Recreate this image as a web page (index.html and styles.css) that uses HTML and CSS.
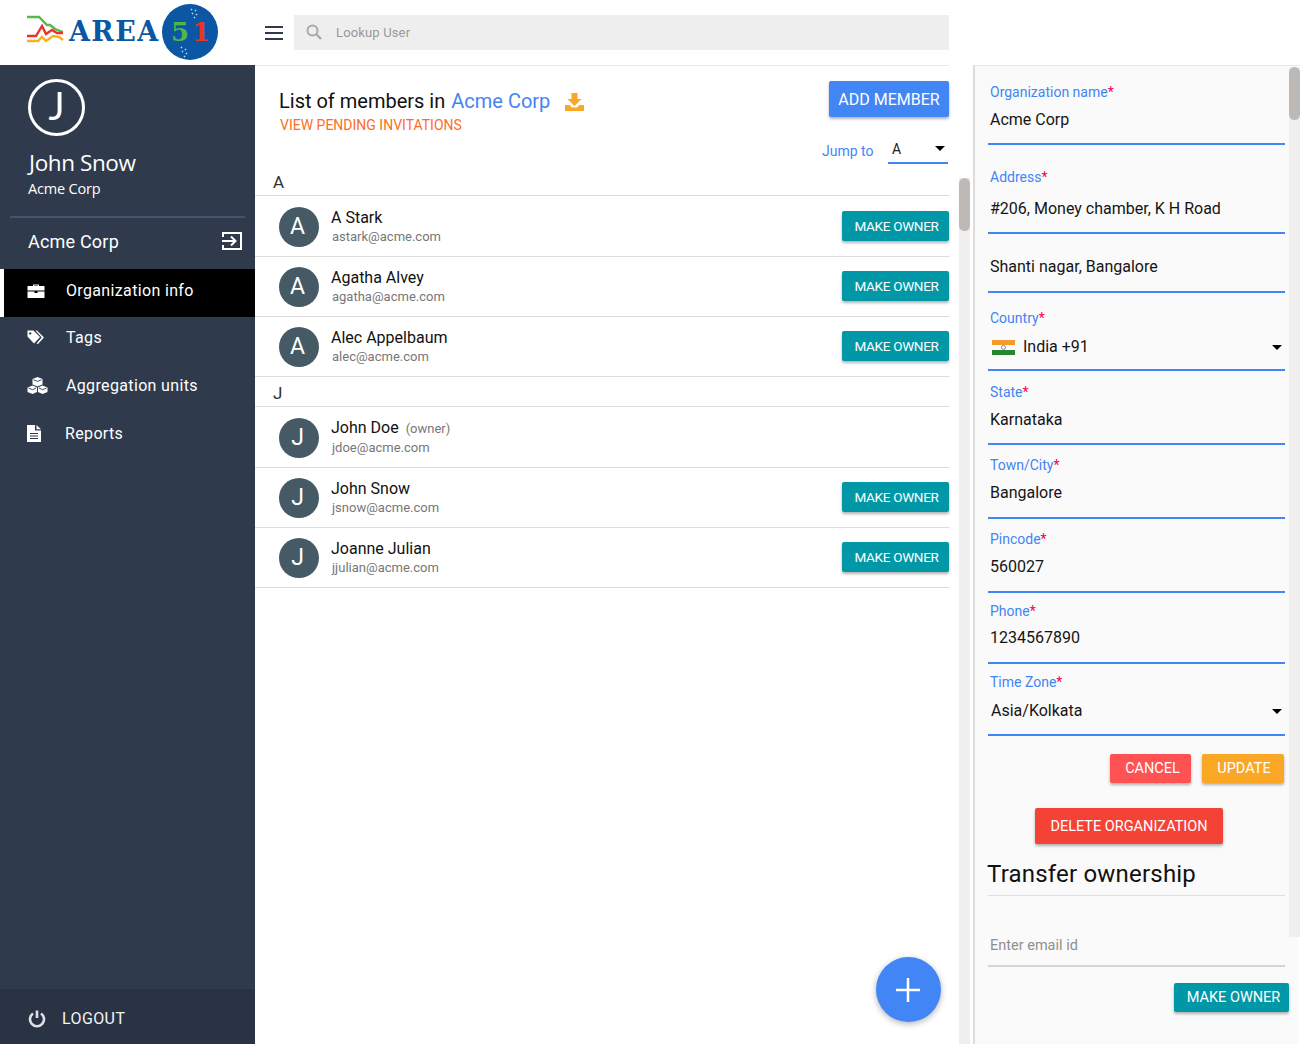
FILE: index.html
```html
<!DOCTYPE html>
<html>
<head>
    <title>Area51 - Organization info</title>
    <meta name="viewport" content="width=device-width, initial-scale=1.0">
    <link rel="stylesheet" href="styles.css">
</head>
<body>
    <header class="topbar">
        <svg class="logo" width="222" height="65" viewBox="0 0 222 65">
            <path d="M27 17H39L47 25H50L55 29L63 32" fill="none" stroke="#58b947" stroke-width="2.4"/>
            <path d="M27 36H36L42 26L46 34L52 30L57 33H63" fill="none" stroke="#e8352a" stroke-width="2.4"/>
            <path d="M27 41H38L42 37L46 41L53 36L59 37L63 40" fill="none" stroke="#f7b21b" stroke-width="2.4"/>
            <text x="69" y="41" class="logo-area">AREA</text>
            <circle cx="190" cy="32" r="28" fill="#0b57a4"/>
            <text x="171" y="41" class="logo-num logo-five">5</text>
            <text x="192" y="41" class="logo-num logo-one">1</text>
            <path d="M191 9l1 1M195 10l1 1M192 13l1 1M196 14l1 1M194 17l1 1M181 47l1 1M185 49l1 1M182 51l1 1M186 53l1 1M184 56l1 1" stroke="#cfe0f2" stroke-width="1.4"/>
        </svg>
        <button class="menu-btn">
            <span></span><span></span><span></span>
        </button>
        <div class="search">
            <svg width="16" height="16" viewBox="0 0 16 16"><circle cx="6.5" cy="6.5" r="5" fill="none" stroke="#a9a9a9" stroke-width="2"/><path d="M10.5 10.5L15 15" stroke="#a9a9a9" stroke-width="2.4"/></svg>
            <span>Lookup User</span>
        </div>
    </header>

    <div class="layout">
        <aside class="sidebar">
            <div class="profile">
                <div class="profile-avatar">J</div>
                <div class="profile-name">John Snow</div>
                <div class="profile-org">Acme Corp</div>
            </div>
            <div class="org-row">
                <span>Acme Corp</span>
                <svg width="22" height="20" viewBox="0 0 22 20"><path d="M2 6V2H20V18H2V14" fill="none" stroke="#fff" stroke-width="2"/><path d="M1 10H14M10 5.5L14.500 10L10 14.500" fill="none" stroke="#fff" stroke-width="2"/></svg>
            </div>
            <nav class="nav">
                <a class="nav-item active">
                    <svg width="18" height="14" viewBox="0 0 18 14"><path d="M6 2V0.500H12V2H17.500V6.500H0.500V2ZM7.200 2H10.800V1.500H7.200ZM0.500 7.500H7.500V9H10.500V7.500H17.500V14H0.500Z" fill="#fff"/></svg>
                    <span>Organization info</span>
                </a>
                <a class="nav-item">
                    <svg width="18" height="15" viewBox="0 0 18 15"><path d="M0.500 0.500H6.500L13 7L7 13.500L0.500 6.500ZM3.200 2.200a1.200 1.200 0 1 0 .01 0ZM8.500 0.500H10L17 7.500L11 14L9.500 13.500L14.700 7.500Z" fill="#fff" fill-rule="evenodd"/></svg>
                    <span>Tags</span>
                </a>
                <a class="nav-item nav-units">
                    <svg width="21" height="17" viewBox="0 0 21 17"><path d="M10.500 0L15.500 2V7.500L10.500 9.500L5.500 7.500V2ZM5.500 8.500L10 10.500V15L5.500 17L0.500 15V10.500ZM15.500 8.500L20.500 10.500V15L15.500 17L11 15V10.500Z" fill="#fff"/><path d="M6.500 2.800L10.500 4.400L14.500 2.800M1.500 11L5.500 12.700L9 11M12 11L15.500 12.700L19.500 11" fill="none" stroke="#2f3a4d" stroke-width="0.900"/></svg>
                    <span>Aggregation units</span>
                </a>
                <a class="nav-item nav-reports">
                    <svg width="14" height="17" viewBox="0 0 14 17"><path d="M0 0H8V5.500H14V17H0ZM9.500 0L14 4.200H9.500Z" fill="#fff"/><path d="M3 8.500H11M3 11H11M3 13.500H11" stroke="#2f3a4d" stroke-width="1"/></svg>
                    <span>Reports</span>
                </a>
            </nav>
            <div class="logout">
                <svg width="18" height="18" viewBox="0 0 18 18"><path d="M5 3.500A7 7 0 1 0 13 3.500" fill="none" stroke="#dfe1e4" stroke-width="2.600"/><path d="M9 0.500V8" stroke="#dfe1e4" stroke-width="2.600"/></svg>
                <span>LOGOUT</span>
            </div>
        </aside>

        <main class="members">
            <div class="members-head">
                <div class="head-left">
                    <h2>List of members in <span class="org-link">Acme Corp</span>
                        <svg class="download" width="19" height="18" viewBox="0 0 19 18"><path d="M6.500 0H12.500V6H16.500L9.500 13L2.500 6H6.500Z" fill="#faa726"/><path d="M0 12H4.500L7 14.500H12L14.500 12H19V18H0Z" fill="#faa726"/></svg>
                    </h2>
                    <a class="pending">VIEW PENDING INVITATIONS</a>
                </div>
                <div class="head-right">
                    <button class="btn btn-add">ADD MEMBER</button>
                    <div class="jump">
                        <span class="jump-label">Jump to</span>
                        <div class="jump-select"><span>A</span><i class="caret"></i></div>
                    </div>
                </div>
            </div>

            <div class="group-label">A</div>
            <div class="member">
                <div class="avatar">A</div>
                <div class="member-info"><div class="member-name">A Stark</div><div class="member-mail">astark@acme.com</div></div>
                <button class="btn btn-owner">MAKE OWNER</button>
            </div>
            <div class="member">
                <div class="avatar">A</div>
                <div class="member-info"><div class="member-name">Agatha Alvey</div><div class="member-mail">agatha@acme.com</div></div>
                <button class="btn btn-owner">MAKE OWNER</button>
            </div>
            <div class="member">
                <div class="avatar">A</div>
                <div class="member-info"><div class="member-name">Alec Appelbaum</div><div class="member-mail">alec@acme.com</div></div>
                <button class="btn btn-owner">MAKE OWNER</button>
            </div>

            <div class="group-label">J</div>
            <div class="member">
                <div class="avatar">J</div>
                <div class="member-info"><div class="member-name">John Doe <small>(owner)</small></div><div class="member-mail">jdoe@acme.com</div></div>
            </div>
            <div class="member">
                <div class="avatar">J</div>
                <div class="member-info"><div class="member-name">John Snow</div><div class="member-mail">jsnow@acme.com</div></div>
                <button class="btn btn-owner">MAKE OWNER</button>
            </div>
            <div class="member">
                <div class="avatar">J</div>
                <div class="member-info"><div class="member-name">Joanne Julian</div><div class="member-mail">jjulian@acme.com</div></div>
                <button class="btn btn-owner">MAKE OWNER</button>
            </div>

            <button class="fab">
                <svg width="26" height="26" viewBox="0 0 26 26"><path d="M13 1V25M1 13H25" stroke="#fff" stroke-width="2.500"/></svg>
            </button>
        </main>

        <div class="list-scroll"><div class="thumb"></div></div>

        <section class="panel">
            <div class="field field-first">
                <label>Organization name<b>*</b></label>
                <div class="value">Acme Corp</div>
            </div>
            <div class="field field-address">
                <label>Address<b>*</b></label>
                <div class="value">#206, Money chamber, K H Road</div>
            </div>
            <div class="field field-line2">
                <div class="value">Shanti nagar, Bangalore</div>
            </div>
            <div class="field field-country">
                <label>Country<b>*</b></label>
                <div class="value value-select">
                    <svg class="flag" width="23" height="15" viewBox="0 0 23 15"><rect width="23" height="5" fill="#f79a2e"/><rect y="5" width="23" height="5" fill="#fafafa"/><rect y="10" width="23" height="5" fill="#25862f"/><circle cx="11.500" cy="7.500" r="2" fill="none" stroke="#6a6fa8" stroke-width="0.800"/></svg>
                    <span>India +91</span>
                    <i class="caret"></i>
                </div>
            </div>
            <div class="field field-std field-state">
                <label>State<b>*</b></label>
                <div class="value">Karnataka</div>
            </div>
            <div class="field field-std">
                <label>Town/City<b>*</b></label>
                <div class="value">Bangalore</div>
            </div>
            <div class="field field-std">
                <label>Pincode<b>*</b></label>
                <div class="value">560027</div>
            </div>
            <div class="field field-short">
                <label>Phone<b>*</b></label>
                <div class="value">1234567890</div>
            </div>
            <div class="field field-short field-zone">
                <label>Time Zone<b>*</b></label>
                <div class="value value-select value-zone">
                    <span>Asia/Kolkata</span>
                    <i class="caret"></i>
                </div>
            </div>

            <div class="form-actions">
                <button class="btn btn-cancel">CANCEL</button>
                <button class="btn btn-update">UPDATE</button>
            </div>
            <div class="delete-row">
                <button class="btn btn-delete">DELETE ORGANIZATION</button>
            </div>

            <h3 class="transfer-title">Transfer ownership</h3>
            <div class="email-input">Enter email id</div>
            <div class="transfer-actions">
                <button class="btn btn-owner btn-transfer">MAKE OWNER</button>
            </div>

            <div class="panel-scroll"><div class="thumb"></div></div>
        </section>
    </div>
</body>
</html>
```

FILE: styles.css
```css
* {
    box-sizing: border-box;
}

html,
body {
    height: 100%;
}

body {
    font-family: Roboto, "Liberation Sans", sans-serif;
    background-color: #fff;
    color: #111;
    margin: 0;
    overflow: hidden;
}

button {
    font-family: inherit;
    border: 0;
    cursor: pointer;
}

/* top bar */
.topbar {
    height: 65px;
    display: flex;
    align-items: center;
    background-color: #fff;
}

.logo {
    flex: none;
    width: 222px;
    height: 65px;
    margin-right: 43px;
}

.logo-area {
    font-family: "DejaVu Serif", serif;
    font-weight: bold;
    font-size: 27px;
    letter-spacing: 1.4px;
    fill: #0b57a4;
}

.logo-num {
    font-family: "DejaVu Serif", serif;
    font-weight: bold;
    font-size: 26px;
}

.logo-five {
    fill: #4fb848;
}

.logo-one {
    fill: #e8352a;
}

.menu-btn {
    width: 18px;
    padding: 0;
    margin-right: 11px;
    background: none;
    display: flex;
    flex-direction: column;
    gap: 4px;
}

.menu-btn span {
    display: block;
    height: 2px;
    background-color: #2f3a4d;
}

.search {
    width: 655px;
    height: 35px;
    margin-top: -1px;
    padding-left: 12px;
    display: flex;
    align-items: center;
    gap: 14px;
    background-color: #eee;
    color: #999;
    font-size: 13px;
    letter-spacing: 0.15px;
}

.layout {
    display: flex;
    height: calc(100vh - 65px);
}

/* sidebar */
.sidebar {
    flex: none;
    width: 255px;
    background-color: #2f3a4d;
    color: #fff;
    display: flex;
    flex-direction: column;
}

.profile {
    height: 153px;
    padding: 14px 0 0 18px;
    margin: 0 10px;
    font-family: "Open Sans", sans-serif;
    border-bottom: 2px solid #47536a;
}

.profile-avatar {
    width: 57px;
    height: 57px;
    border: 3px solid #fff;
    border-radius: 50%;
    font-family: Lato, sans-serif;
    font-size: 38px;
    line-height: 47px;
    text-align: center;
}

.profile-name {
    font-size: 22.500px;
    letter-spacing: -0.4px;
    line-height: 30px;
    margin-top: 12px;
    padding-left: 1px;
}

.profile-org {
    font-size: 14.500px;
    letter-spacing: -0.2px;
    line-height: 20px;
    margin-top: 1px;
}

.org-row {
    height: 51px;
    padding: 0 12px 5px 28px;
    display: flex;
    align-items: center;
    justify-content: space-between;
    font-size: 18px;
    letter-spacing: 0.2px;
}

.nav-item {
    height: 48px;
    padding: 0 0 7px 27px;
    display: flex;
    align-items: center;
    font-size: 16px;
    letter-spacing: 0.35px;
}

.nav-item svg {
    flex: none;
}

.nav-item svg + span {
    margin-left: 21px;
}

.nav-units svg + span {
    margin-left: 18px;
}

.nav-reports svg + span {
    margin-left: 24px;
}

.nav-item.active {
    background-color: #000;
    border-left: 4px solid #fff;
    padding: 0 0 5px 23px;
}

.logout {
    margin-top: auto;
    height: 55px;
    padding: 4px 0 0 28px;
    display: flex;
    align-items: center;
    gap: 16px;
    background-color: #2a3344;
    color: #f2f2f2;
    font-size: 16px;
    letter-spacing: 0.4px;
}

/* member list */
.members {
    position: relative;
    width: 694px;
    flex: none;
    margin-right: 10px;
    border-top: 1px solid #e8e8e8;
}

.members-head {
    height: 100px;
    padding: 15px 0 0 24px;
    display: flex;
    justify-content: space-between;
}

.head-left h2 {
    margin: 0;
    padding-top: 9px;
    font-size: 20px;
    font-weight: 400;
    line-height: 22px;
    display: flex;
    align-items: center;
}

.org-link {
    color: #4285f4;
    margin-left: 6px;
}

.download {
    margin-left: 15px;
    margin-top: 2px;
}

.pending {
    display: block;
    margin: 4px 0 0 1px;
    color: #ff6d1f;
    font-size: 14px;
    line-height: 18px;
}

.head-right {
    display: flex;
    flex-direction: column;
    align-items: flex-end;
}

.btn {
    color: #fff;
    border-radius: 2px;
    box-shadow: 0 2px 3px rgba(0, 0, 0, 0.3);
}

.btn-add {
    width: 120px;
    height: 36px;
    background-color: #4285f4;
    font-size: 16px;
}

.jump {
    width: 127px;
    margin-top: 18px;
    display: flex;
    align-items: center;
    color: #4285f4;
    font-size: 14px;
}

.jump-label {
    width: 66px;
    margin-top: 2px;
}

.jump-select {
    width: 60px;
    height: 29px;
    padding: 6px 3px 0 4px;
    border-bottom: 2px solid #4285f4;
    color: #222;
    display: flex;
    align-items: flex-start;
    justify-content: space-between;
}

.jump-select .caret {
    margin-top: 5px;
}

.caret {
    width: 0;
    height: 0;
    border-left: 5px solid transparent;
    border-right: 5px solid transparent;
    border-top: 5px solid #000;
}

.group-label {
    height: 30px;
    padding: 6px 0 0 18px;
    margin-bottom: 1px;
    border-bottom: 1px solid #ddd;
    font-size: 17px;
    line-height: 20px;
    color: #333;
}

.member {
    height: 60px;
    padding: 0 0 0 24px;
    display: flex;
    align-items: center;
    border-bottom: 1px solid #ddd;
}

.avatar {
    flex: none;
    width: 40px;
    height: 40px;
    padding-right: 3px;
    border-radius: 50%;
    background-color: #455a64;
    color: #fff;
    font-size: 23px;
    line-height: 40px;
    text-align: center;
}

.member-info {
    flex: 1;
    margin-left: 12px;
    padding: 1px 0;
}

.member-name {
    font-size: 16px;
    line-height: 20px;
}

.member-name small {
    font-size: 13px;
    color: #777;
    margin-left: 3px;
}

.member-mail {
    margin-left: 1px;
    font-size: 13px;
    line-height: 18px;
    color: #777;
}

.btn-owner {
    width: 107px;
    height: 30px;
    margin-top: -2px;
    padding: 0 0 0 2px;
    background-color: #0097a7;
    font-size: 13.500px;
    letter-spacing: -0.3px;
}

.fab {
    position: absolute;
    left: 620.500px;
    top: 891px;
    width: 65px;
    height: 65px;
    padding: 0;
    border-radius: 50%;
    background-color: #4285f4;
    box-shadow: 0 2px 6px rgba(0, 0, 0, 0.3);
    display: flex;
    align-items: center;
    justify-content: center;
}

/* scroll bars */
.list-scroll {
    flex: none;
    width: 11px;
    margin-top: 113px;
    background-color: #f0efee;
}

.thumb {
    height: 53px;
    border-radius: 6px;
    background-color: #bdb9b7;
}

.panel-scroll {
    position: absolute;
    top: 1px;
    right: 0;
    width: 11px;
    height: 870px;
    background-color: #f0efee;
}

/* right panel */
.panel {
    position: relative;
    flex: 1;
    margin-left: 3px;
    border-left: 2px solid #dcdcdc;
    border-top: 1px solid #e8e8e8;
    background: linear-gradient(#fafafa, #fafafa) no-repeat 0 0 / 323px 100%;
    padding-left: 13px;
    min-width: 0;
}

.field {
    width: 297px;
    border-bottom: 2px solid #4285f4;
    padding-left: 2px;
}

.field label {
    display: block;
    color: #4285f4;
    font-size: 14px;
    line-height: 18px;
}

.field b {
    color: #f50057;
    font-weight: 400;
}

.value {
    font-size: 16px;
    line-height: 20px;
    color: #151515;
}

.field-first {
    height: 79px;
    padding-top: 17px;
}

.field-first .value {
    margin-top: 9px;
}

.field-address {
    height: 89px;
    padding-top: 23px;
}

.field-address .value {
    margin-top: 13px;
}

.field-line2 {
    height: 59px;
    padding-top: 23px;
}

.field-country {
    height: 78px;
    padding-top: 16px;
}

.field-std {
    height: 74px;
    padding-top: 11px;
}

.field-std .value {
    margin-top: 9px;
}

.field-state {
    padding-top: 12px;
}

.field-short {
    height: 71px;
    padding-top: 9px;
}

.field-short .value {
    margin-top: 8px;
}

.field-zone {
    height: 72px;
}

.field-short .value-zone {
    margin-top: 10px;
}

.value-select {
    margin-top: 10px;
    padding-right: 3px;
    display: flex;
    align-items: center;
}

.value-select .caret {
    margin-left: auto;
}

.value-zone {
    padding-left: 1px;
}

.flag {
    margin: 0 8px 0 2px;
}

.form-actions {
    width: 296px;
    margin-top: 18px;
    display: flex;
    justify-content: flex-end;
    gap: 11px;
}

.btn-cancel {
    width: 81px;
    height: 29px;
    margin-top: 0;
    padding: 0 0 0 4px;
    background-color: #ff5252;
    font-size: 14.500px;
}

.btn-update {
    width: 82px;
    height: 29px;
    padding: 0 0 0 2px;
    background-color: #faa726;
    font-size: 14.500px;
}

.delete-row {
    margin: 25px 0 0 47px;
}

.btn-delete {
    width: 188px;
    height: 36px;
    background-color: #f44336;
    font-size: 14.500px;
}

.transfer-title {
    width: 297px;
    height: 37px;
    margin: 15px 0 0;
    border-bottom: 1px solid #e0e0e0;
    font-size: 24px;
    font-weight: 400;
    line-height: 30px;
    letter-spacing: 0.2px;
    text-indent: -1px;
}

.email-input {
    width: 297px;
    height: 71px;
    padding: 41px 0 0 2px;
    border-bottom: 2px solid #d5d5d5;
    color: #8f8f8f;
    font-size: 14.500px;
    line-height: 18px;
}

.transfer-actions {
    width: 301px;
    margin-top: 16px;
    display: flex;
    justify-content: flex-end;
}

.btn-transfer {
    width: 115px;
    height: 29px;
    margin-top: 0;
    padding-left: 4px;
    font-size: 14.500px;
    letter-spacing: 0;
}
```
